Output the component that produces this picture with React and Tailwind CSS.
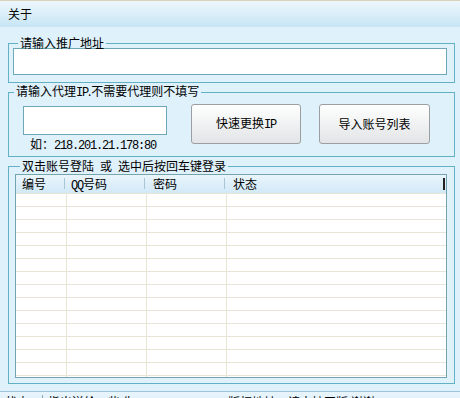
import React from 'react';

const font = { fontFamily: '"Noto Sans CJK SC", "Noto Sans", sans-serif' };
const rows = Array.from({ length: 15 });

const Mono = ({ children }) => (
  <span className="font-['Liberation_Mono',monospace] tracking-[-1.2px]">{children}</span>
);

const Sp = () => <span className="inline-block w-[6px]"> </span>;

const App = () => {
  return (
    <div
      style={font}
      className="w-[460px] h-[398px] overflow-hidden bg-[#dff1fb] text-[12px] text-black flex flex-col"
    >
      {/* menu bar */}
      <div className="h-[27px] shrink-0 border-t border-[#d9d2bb] bg-gradient-to-b from-[#eef7fc] to-[#c6e5f5] flex items-center px-[8px] leading-none">
        关于
      </div>

      {/* 推广地址 */}
      <fieldset className="ml-[8px] mt-[11px] w-[447px] h-[45px] shrink-0 border border-[#63b1c6] pl-[4px]">
        <legend className="ml-[5px] px-[2px] leading-[10px]">请输入推广地址</legend>
        <input className="block w-[434px] h-[27px] border border-[#6ea7b7] bg-white outline-none" />
      </fieldset>

      {/* 代理IP */}
      <fieldset className="ml-[8px] mt-[3px] w-[447px] h-[71px] shrink-0 border border-[#63b1c6]">
        <legend className="ml-[5px] px-[2px] leading-[10px]">
          请输入代理<Mono>IP</Mono>.不需要代理则不填写
        </legend>
        <div className="flex pl-[14px]">
          <div className="flex flex-col mt-[8px]">
            <input className="block w-[144px] h-[29px] border border-[#6ea7b7] bg-white outline-none" />
            <div className="ml-[7px] mt-px leading-[16px]">
              如：<Mono>218.201.21.178:80</Mono>
            </div>
          </div>
          <button className="ml-[24px] mt-[6px] w-[110px] h-[40px] rounded-[3px] border border-[#9b9fa2] bg-gradient-to-b from-white to-[#e2e4e6] leading-none">
            快速更换<Mono>IP</Mono>
          </button>
          <button className="ml-[18px] mt-[6px] w-[111px] h-[40px] rounded-[3px] border border-[#9b9fa2] bg-gradient-to-b from-white to-[#e2e4e6] leading-none">
            导入账号列表
          </button>
        </div>
      </fieldset>

      {/* 账号列表 */}
      <fieldset className="ml-[8px] mt-[4px] w-[447px] h-[223px] shrink-0 border border-[#63b1c6] pl-[6px]">
        <legend className="ml-[5px] px-[2px] leading-[10px]">
          双击账号登陆<Sp />或<Sp />选中后按回车键登录
        </legend>
        <div className="mt-[3px] w-[432px] h-[204px] border border-[#74a3b1] bg-white overflow-hidden relative">
          <div className="h-[18px] flex bg-gradient-to-b from-[#eaf5fc] to-[#d2e9f7] leading-[18px]">
            <div className="w-[51px] pl-[6px] relative">
              编号
              <span className="absolute right-[2px] top-[3px] h-[11px] w-px bg-[#a9c6d6]" />
            </div>
            <div className="w-[80px] pl-[4px] relative">
              <Mono>QQ</Mono>号码
              <span className="absolute right-[2px] top-[3px] h-[11px] w-px bg-[#a9c6d6]" />
            </div>
            <div className="w-[80px] pl-[6px] relative">
              密码
              <span className="absolute right-[2px] top-[3px] h-[11px] w-px bg-[#a9c6d6]" />
            </div>
            <div className="flex-1 pl-[6px]">状态</div>
            <span className="absolute left-[427px] top-[3px] h-[12px] w-[2px] bg-[#222]" />
          </div>
          {rows.map((_, i) => (
            <div key={i} className="h-[13px] flex border-t border-[#e8e5d6]">
              <div className="w-[51px] border-r border-[#e8e5d6]" />
              <div className="w-[80px] border-r border-[#e8e5d6]" />
              <div className="w-[80px] border-r border-[#e8e5d6]" />
              <div className="flex-1" />
            </div>
          ))}
        </div>
      </fieldset>

      {/* status bar */}
      <div className="mt-[7px] h-[20px] shrink-0 border-t border-[#9cc3d8] bg-gradient-to-b from-[#e9f5fc] to-[#d3ebf8] flex items-start pt-[3px] leading-[14px]">
        <div className="w-[43px] pl-[5px] border-r border-[#8aa9b9] h-[16px]">状态</div>
        <div className="pl-[5px] w-[180px]">指出送给一些 先</div>
        <div className="pl-[5px]">版权地址：请支持正版 谢谢</div>
      </div>
    </div>
  );
};

export default App;
